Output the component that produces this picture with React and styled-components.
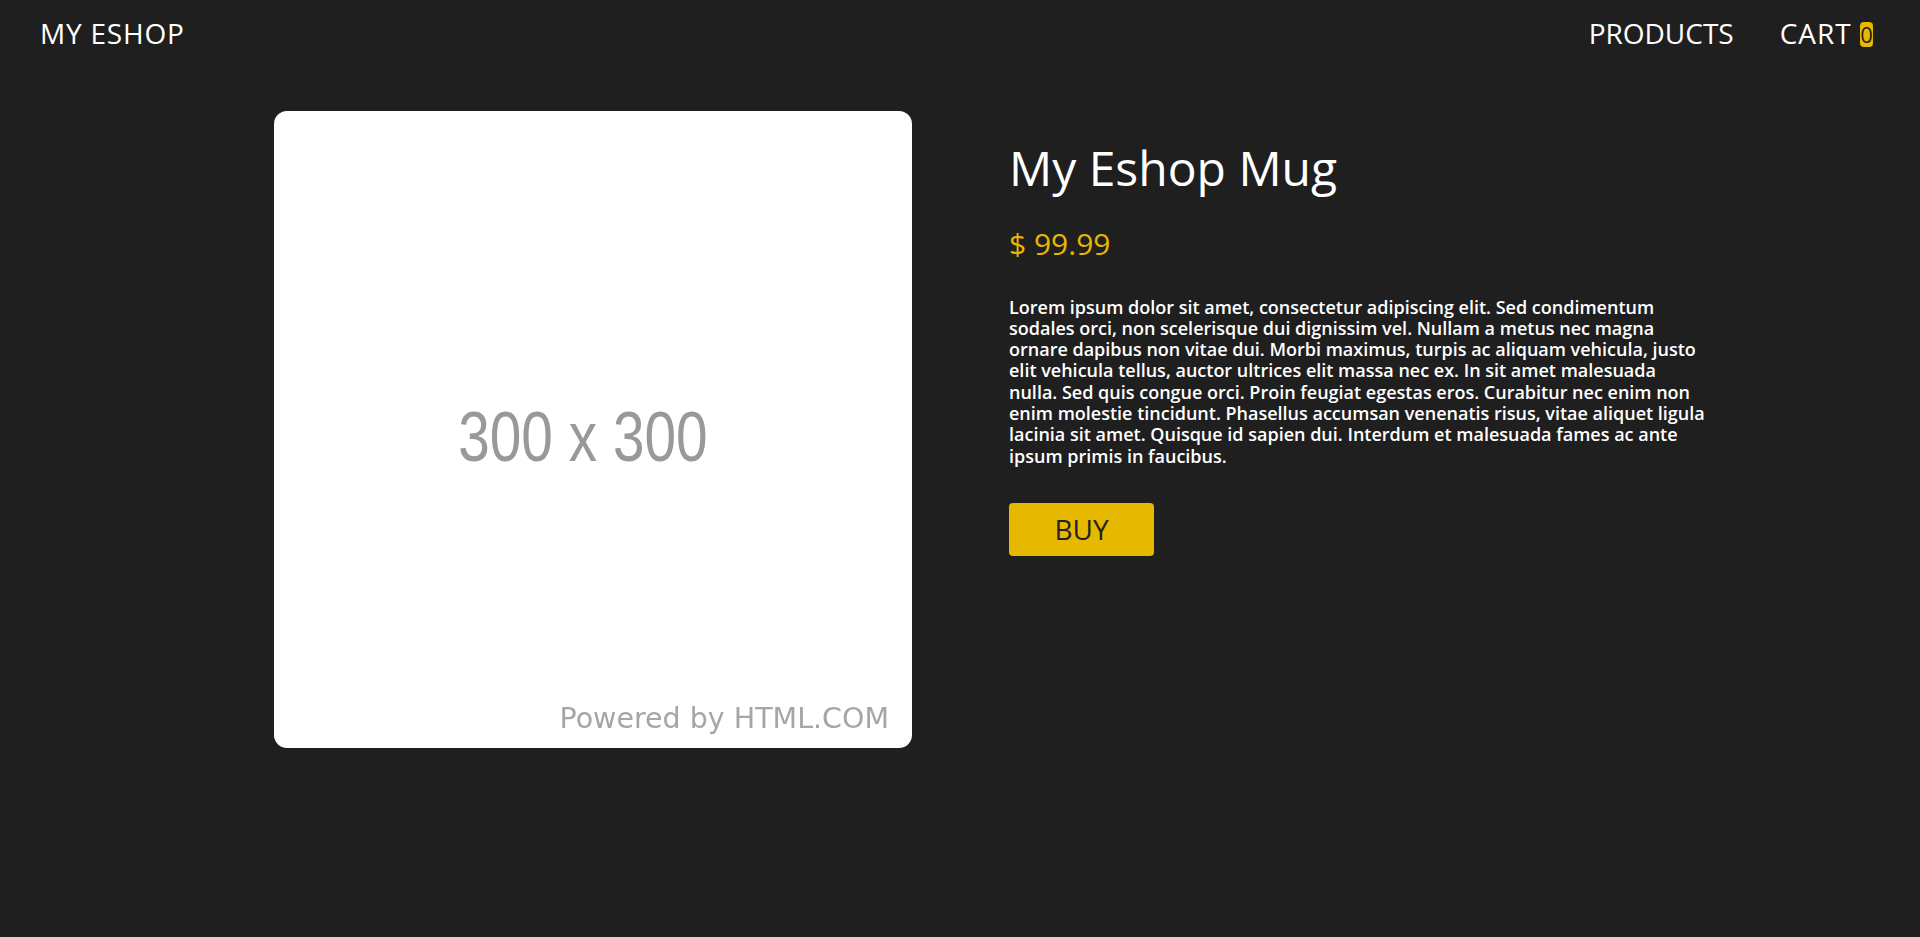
import React from 'react'
import styled, { createGlobalStyle } from 'styled-components'

const GlobalStyle = createGlobalStyle`
    html, body {
        margin: 0;
        padding: 0;
        background-color: #1f1f1f;
        font-family: "Open Sans", "Noto Sans", sans-serif;
        color: #ffffff;
    }
    * {
        box-sizing: border-box;
    }
`

const Page = styled.div`
    min-height: 937px;
    background-color: #1f1f1f;
`

const Header = styled.header`
    height: 66px;
    display: flex;
    align-items: center;
    justify-content: space-between;
    padding: 0 47px 0 40px;
`
const Logo = styled.div`
    font-size: 28px;
    color: #ffffff;
    letter-spacing: 0.8px;
`
const Nav = styled.nav`
    display: flex;
    align-items: center;
    gap: 46px;
`
const NavItem = styled.a`
    font-size: 28px;
    color: #ffffff;
    text-decoration: none;
    cursor: pointer;
`
const CartItem = styled(NavItem)`
    letter-spacing: 1px;
`
const Badge = styled.span`
    display: inline-block;
    background-color: #e6b800;
    color: #1f1f1f;
    font-size: 22px;
    line-height: 25px;
    width: 13px;
    letter-spacing: 0;
    text-align: center;
    border-radius: 4px;
    vertical-align: 1px;
`

const Main = styled.main`
    display: flex;
    align-items: flex-start;
    gap: 97px;
    padding: 45px 0 0 274px;
`

const ImageCard = styled.div`
    width: 638px;
    height: 637px;
    background-color: #ffffff;
    border-radius: 13px;
    display: flex;
    flex-direction: column;
    align-items: center;
    overflow: hidden;
`
const SizeLabel = styled.div`
    margin-top: 290px;
    margin-right: 20px;
    font-family: "Liberation Sans", Arial, sans-serif;
    font-size: 71px;
    line-height: 1;
    color: #999999;
    transform: scaleX(0.8);
    filter: blur(0.4px);
`
const Powered = styled.div`
    margin-top: auto;
    margin-bottom: 15px;
    margin-right: 23px;
    align-self: flex-end;
    font-family: "DejaVu Sans", Verdana, sans-serif;
    font-size: 28.5px;
    line-height: 1;
    color: #a6a6a6;
    filter: blur(0.3px);
`

const Info = styled.div`
    width: 699.5px;
    padding-top: 28px;
    display: flex;
    flex-direction: column;
    align-items: flex-start;
`
const Title = styled.h1`
    margin: 0;
    font-size: 48px;
    font-weight: 400;
    line-height: 1.2;
`
const Price = styled.div`
    margin-top: 30px;
    font-size: 30px;
    line-height: 34px;
    color: #e6b800;
`
const Description = styled.p`
    margin: 36px 0 0 0;
    font-size: 18px;
    font-weight: 600;
    line-height: 21.3px;
`
const BuyButton = styled.button`
    margin-top: 36px;
    width: 145px;
    height: 53px;
    border: none;
    border-radius: 4px;
    background-color: #e6b800;
    color: #222222;
    font-family: "Open Sans", "Noto Sans", sans-serif;
    font-size: 28px;
    cursor: pointer;
`

const product = {
    name: 'My Eshop Mug',
    price: '99.99',
    description:
        'Lorem ipsum dolor sit amet, consectetur adipiscing elit. Sed condimentum sodales orci, non scelerisque dui dignissim vel. Nullam a metus nec magna ornare dapibus non vitae dui. Morbi maximus, turpis ac aliquam vehicula, justo elit vehicula tellus, auctor ultrices elit massa nec ex. In sit amet malesuada nulla. Sed quis congue orci. Proin feugiat egestas eros. Curabitur nec enim non enim molestie tincidunt. Phasellus accumsan venenatis risus, vitae aliquet ligula lacinia sit amet. Quisque id sapien dui. Interdum et malesuada fames ac ante ipsum primis in faucibus.',
}

export default function App() {
    const cartCount = 0
    return (
        <Page>
            <GlobalStyle />
            <Header>
                <Logo>MY ESHOP</Logo>
                <Nav>
                    <NavItem>PRODUCTS</NavItem>
                    <CartItem>
                        CART <Badge>{cartCount}</Badge>
                    </CartItem>
                </Nav>
            </Header>
            <Main>
                <ImageCard>
                    <SizeLabel>300 x 300</SizeLabel>
                    <Powered>Powered by HTML.COM</Powered>
                </ImageCard>
                <Info>
                    <Title>{product.name}</Title>
                    <Price>$ {product.price}</Price>
                    <Description>{product.description}</Description>
                    <BuyButton>BUY</BuyButton>
                </Info>
            </Main>
        </Page>
    )
}
